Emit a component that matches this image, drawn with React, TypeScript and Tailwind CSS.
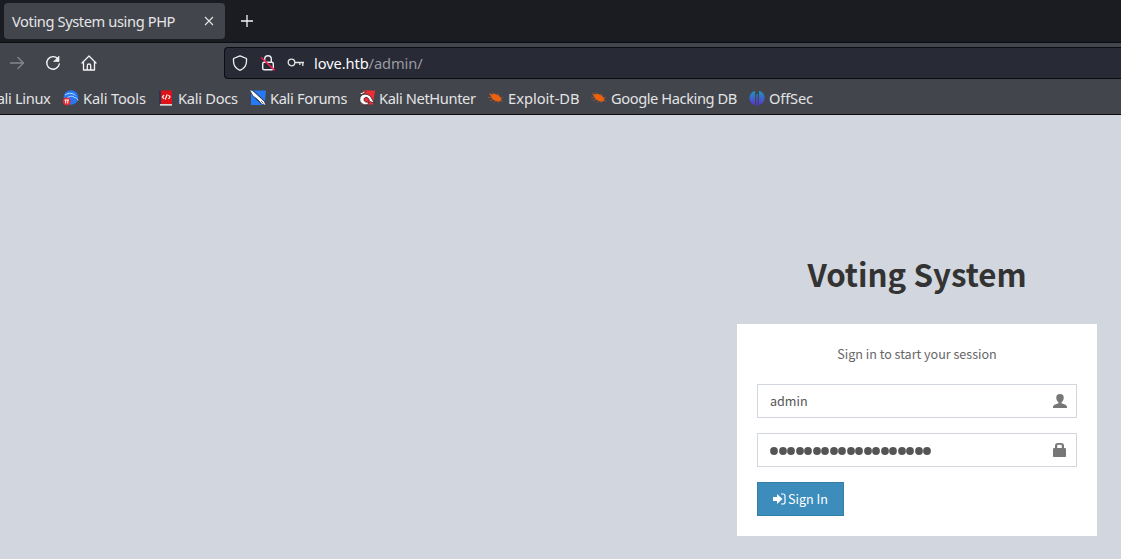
import type { ReactNode } from "react";

function KaliTools() {
  return (
    <svg width="16" height="16" viewBox="0 0 16 16">
      <circle cx="8" cy="7.500" r="7.300" fill="#2777f5" />
      <path d="M2 5C6 2.500 10 3 12.500 5.500M4 8c3-2.500 6-2 7.500-.5 2 0 3 1.500 3.500 3" fill="none" stroke="#bfe0ff" strokeWidth="1" />
      <circle cx="3.700" cy="11.500" r="3.900" fill="#e5262d" />
      <path d="M1.500 10h4.500M2.700 10v3.500M4.800 10v3.500" fill="none" stroke="#fff" strokeWidth="1" />
    </svg>
  );
}

function KaliDocs() {
  return (
    <svg className="ml-px" width="14" height="16" viewBox="0 0 14 16">
      <path d="M1 .5h12v14H1z" fill="#e01217" />
      <path d="M0 .5h2v14H0z" fill="#263654" />
      <path d="M1 14h12v1.700H1z" fill="#d8d5d5" />
      <path d="M5 5 3.500 7 5 9M9.500 5 11 7 9.500 9M8.200 4.500l-2 5" fill="none" stroke="#fff" strokeWidth="1.200" />
    </svg>
  );
}

function KaliForums() {
  return (
    <svg width="16" height="16" viewBox="0 0 16 16">
      <path d="M1 .5h15l-1.500 14.500H1z" fill="#2779f4" />
      <path d="M0 0c2.500.3 4.500 1.500 6.500 3.500L12 8.500l2.500 2.500 1.500 4.500-5-1.500-3.500-3.500L2 5z" fill="#18202f" />
      <path d="M0 0c2.500.7 4 2 6 4l5.500 5 2.500 2.500 1.500 3.500-4-1.500-3-3.500L3 5.500z" fill="#fff" />
      <path d="m11 11 2.500 2.500" stroke="#25314b" strokeWidth=".7" />
    </svg>
  );
}

function NetHunter() {
  return (
    <svg width="16" height="16" viewBox="0 0 16 16">
      <path d="M4 .5h12L14 14.500H2z" fill="#f02c35" />
      <path d="M.8 9.500C.8 3 8.500 3 11.500 6.500c1.800 2.200 2 4.500 4 6-3.500.3-5-1.300-5.800-3.500C8.500 6.500 5 7 5 9.500s2.300 3 5 2.500L8.500 14.700C4 15.200.8 13 .8 9.500z" fill="#fff" stroke="#261e26" strokeWidth=".8" />
      <path d="M.5 3.500 5 1.500 7 2 2.500 4.500z" fill="#fff" stroke="#261e26" strokeWidth=".6" />
    </svg>
  );
}

function ExploitBug() {
  return (
    <svg width="16" height="16" viewBox="0 0 16 16">
      <path d="M1.500 4 5 4.300l2-.5 4 2 2.500 3-1 2.500-3.500.2-4-2-2-3z" fill="#ed610d" />
      <path d="m1 3 3 2M4 2 6 4M10 3.500l1 3M0 7.500l4 .2M2 11l3-2M6 12.500l2-2M10 13l1-2M13 7.500l2 .3M12 10l3 1.500" stroke="#bd602d" strokeWidth=".6" />
    </svg>
  );
}

function OffSec() {
  return (
    <svg width="16" height="16" viewBox="0 0 16 16">
      <defs>
        <linearGradient id="offsec" gradientUnits="userSpaceOnUse" x1="0" y1="0" x2="0" y2="16">
          <stop stopColor="#16a0bd" />
          <stop offset="1" stopColor="#602cda" />
        </linearGradient>
      </defs>
      <path d="M6 .7v14.600C-1.500 13-1.500 3 6 .7zM7.300 4h1.400v12H7.300zM10 .7v14.600c7.500-2.300 7.500-12.300 0-14.600z" fill="url(#offsec)" />
    </svg>
  );
}

function Bookmark({ icon, className, children }: { icon: ReactNode; className: string; children: ReactNode }) {
  return (
    <div className={`flex shrink-0 items-center ${className}`}>
      <span className="flex w-5 shrink-0 pt-px">{icon}</span>
      <span className="whitespace-nowrap">{children}</span>
    </div>
  );
}

function Browser() {
  return (
    <header className="h-[115px] border-b border-[#0c0c0e] bg-[#42454c] font-['Noto_Sans',sans-serif] text-[14.67px] text-[#f0f0f1]">
      <div className="flex h-[43px] items-start border-b border-[#0c0d10] bg-[#1b1c21] pt-[3px] pl-1">
        <div className="flex h-9 w-[221px] items-center justify-between rounded-[4px] bg-[#42454c] pr-[11px] pl-2">
          <span className="tracking-[-0.400px] whitespace-nowrap text-[#e6e6e7]">Voting System using PHP</span>
          <svg width="10" height="10" viewBox="0 0 10 10" stroke="#e4e4e5" strokeWidth="1.100"><path d="m1 1 8 8M9 1 1 9" /></svg>
        </div>
        <svg className="mt-3 ml-4" width="12" height="12" viewBox="0 0 12 12" stroke="#f4f4f5" strokeWidth="1.300"><path d="M6 0v12M0 6h12" /></svg>
      </div>
      <nav className="flex h-10 items-center">
        <div className="flex w-[224px] items-center">
          <svg className="ml-[9px]" width="16" height="16" viewBox="0 0 16 16" fill="none" stroke="#86888d" strokeWidth="1.300" strokeLinecap="round" strokeLinejoin="round"><path d="M1.500 8h13M9 2.500 14.500 8 9 13.500" /></svg>
          <svg className="ml-5" width="16" height="16" viewBox="0 0 16 16" fill="none" stroke="#f4f4f5" strokeWidth="1.400" strokeLinecap="round"><path d="M12.800 3.700A6.300 6.300 0 1 0 14.300 9" /><path d="M14 1.500v5H9z" fill="#f4f4f5" strokeWidth=".7" /></svg>
          <svg className="ml-[19.500px]" width="16" height="16" viewBox="0 0 16 16" fill="none" stroke="#f4f4f5" strokeWidth="1.300" strokeLinecap="round" strokeLinejoin="round"><path d="m1 8 7-7 7 7M2.500 7v8h11V7M6.300 15v-4.500c0-2 3.400-2 3.400 0V15" /></svg>
        </div>
        <div className="flex h-8 flex-1 items-center rounded-l-[4px] border border-r-0 border-[#0d0e13] bg-[#282a36] pl-[7px]">
          <svg width="16" height="16" viewBox="0 0 16 16" fill="none" stroke="#f0f0f1" strokeWidth="1.300" strokeLinejoin="round"><path d="m8 .8 6.500 2.700v2.800c0 4.200-2.600 7.500-6.500 9-3.900-1.500-6.500-4.800-6.500-9V3.500z" /></svg>
          <svg className="ml-3" width="16" height="16" viewBox="0 0 16 16" fill="none" stroke="#f0f0f1" strokeWidth="1.400"><rect x="2.700" y="7.200" width="10.600" height="7.600" rx="1.500" /><path d="M4.700 7V4a3.300 3.300 0 0 1 6.600 0v3" /><path d="m1.200 2.500 13.500 12.800" stroke="#f02050" strokeWidth="1.600" /></svg>
          <svg className="ml-[11px]" width="18" height="16" viewBox="0 0 18 16" fill="none" stroke="#e4e4e5" strokeWidth="1.300"><circle cx="4.500" cy="7.500" r="3.300" /><path d="M7.800 7.500H17M15.800 7.500V11M12.800 7.500V10" /></svg>
          <span className="ml-[9px] tracking-[-0.100px] whitespace-nowrap text-[#fbfbfe]">love.htb<span className="text-[#989aa2]">/admin/</span></span>
        </div>
      </nav>
      <div className="flex h-[29px] items-center overflow-hidden text-[#e2e3e4]">
        <span className="-ml-3 w-[75px] shrink-0 tracking-[-0.350px] whitespace-nowrap">Kali Linux</span>
        <Bookmark icon={<KaliTools />} className="w-[95px] tracking-[-0.150px]">Kali Tools</Bookmark>
        <Bookmark icon={<KaliDocs />} className="w-[92px] tracking-[-0.280px]">Kali Docs</Bookmark>
        <Bookmark icon={<KaliForums />} className="w-[109px] tracking-[-0.350px]">Kali Forums</Bookmark>
        <Bookmark icon={<NetHunter />} className="w-[129px] tracking-[-0.380px]">Kali NetHunter</Bookmark>
        <Bookmark icon={<ExploitBug />} className="w-[103px]">Exploit-DB</Bookmark>
        <Bookmark icon={<ExploitBug />} className="w-[158px] tracking-[-0.420px]">Google Hacking DB</Bookmark>
        <Bookmark icon={<OffSec />} className="w-[70px] tracking-[-0.170px]">OffSec</Bookmark>
      </div>
    </header>
  );
}

export default function App() {
  return (
    <div className="h-[559px] w-[1121px] overflow-hidden bg-[#d2d6de]">
      <Browser />
      <main className="ml-[737px] w-[360px] pt-[135px] font-['Noto_Sans_CJK_SC',sans-serif]">
        <h1 className="flex h-[49px] items-center justify-center text-[31.300px] font-bold whitespace-nowrap text-[#333]">Voting System</h1>
        <form className="mt-[25px] h-[212px] bg-white px-5 pt-5 text-[12.550px]" onSubmit={(e) => e.preventDefault()}>
          <p className="flex h-5 items-center justify-center whitespace-nowrap text-[#666]">Sign in to start your session</p>
          <div className="mt-5 flex h-[34px] items-center justify-between border border-[#d2d6de] pr-[9px] pl-3">
            <span className="text-[#555]">admin</span>
            <svg width="14" height="14" viewBox="0 0 14 14" fill="#777"><path d="M7 0C4.500 0 3 1.300 3.300 4c.1 2 1 3.500 2.200 4.200v1L2 10.500c-1.300.6-2 1.300-2 3.500h14c0-2.200-.7-2.900-2-3.500L8.500 9.200v-1C9.700 7.500 10.600 6 10.700 4 11 1.300 9.500 0 7 0z" /></svg>
          </div>
          <div className="mt-[15px] flex h-[34px] items-center justify-between border border-[#d2d6de] pr-[10px] pl-3">
            <span className="flex w-[161px] justify-between pt-[2px]" aria-label="Password">
              {Array.from({ length: 19 }, (_, i) => (
                <svg key={i} className="shrink-0" width="8" height="8" viewBox="0 0 8 8" fill="#555"><circle cx="4" cy="4" r="3.900" /></svg>
              ))}
            </span>
            <svg width="13" height="14" viewBox="0 0 13 14" fill="#777"><path fillRule="evenodd" d="M0 6.500C0 5.500.5 5 1.500 5H2V3C2 1 3 0 5 0h3c2 0 3 1 3 3v2h.5c1 0 1.500.5 1.500 1.500V13c0 .6-.4 1-1 1H1c-.6 0-1-.4-1-1zM4.200 5h4.600V3c0-.8-.4-1.200-1.200-1.200H5.400C4.600 1.800 4.200 2.200 4.200 3z" /></svg>
          </div>
          <button className="mt-[15px] flex h-[34px] w-[87px] items-center border border-[#367fa9] bg-[#3c8dbc] pl-[15px] text-white">
            <svg width="13" height="14" viewBox="0 0 13 14" fill="#fff"><path d="M0 5h4V2l5.500 5L4 12V9H0z" /><path d="M8 2h2c1.400 0 2 .6 2 2v6c0 1.400-.6 2-2 2H8" fill="none" stroke="#fff" strokeWidth="1.200" /></svg>
            <span className="ml-0.5 whitespace-nowrap">Sign In</span>
          </button>
        </form>
      </main>
    </div>
  );
}
